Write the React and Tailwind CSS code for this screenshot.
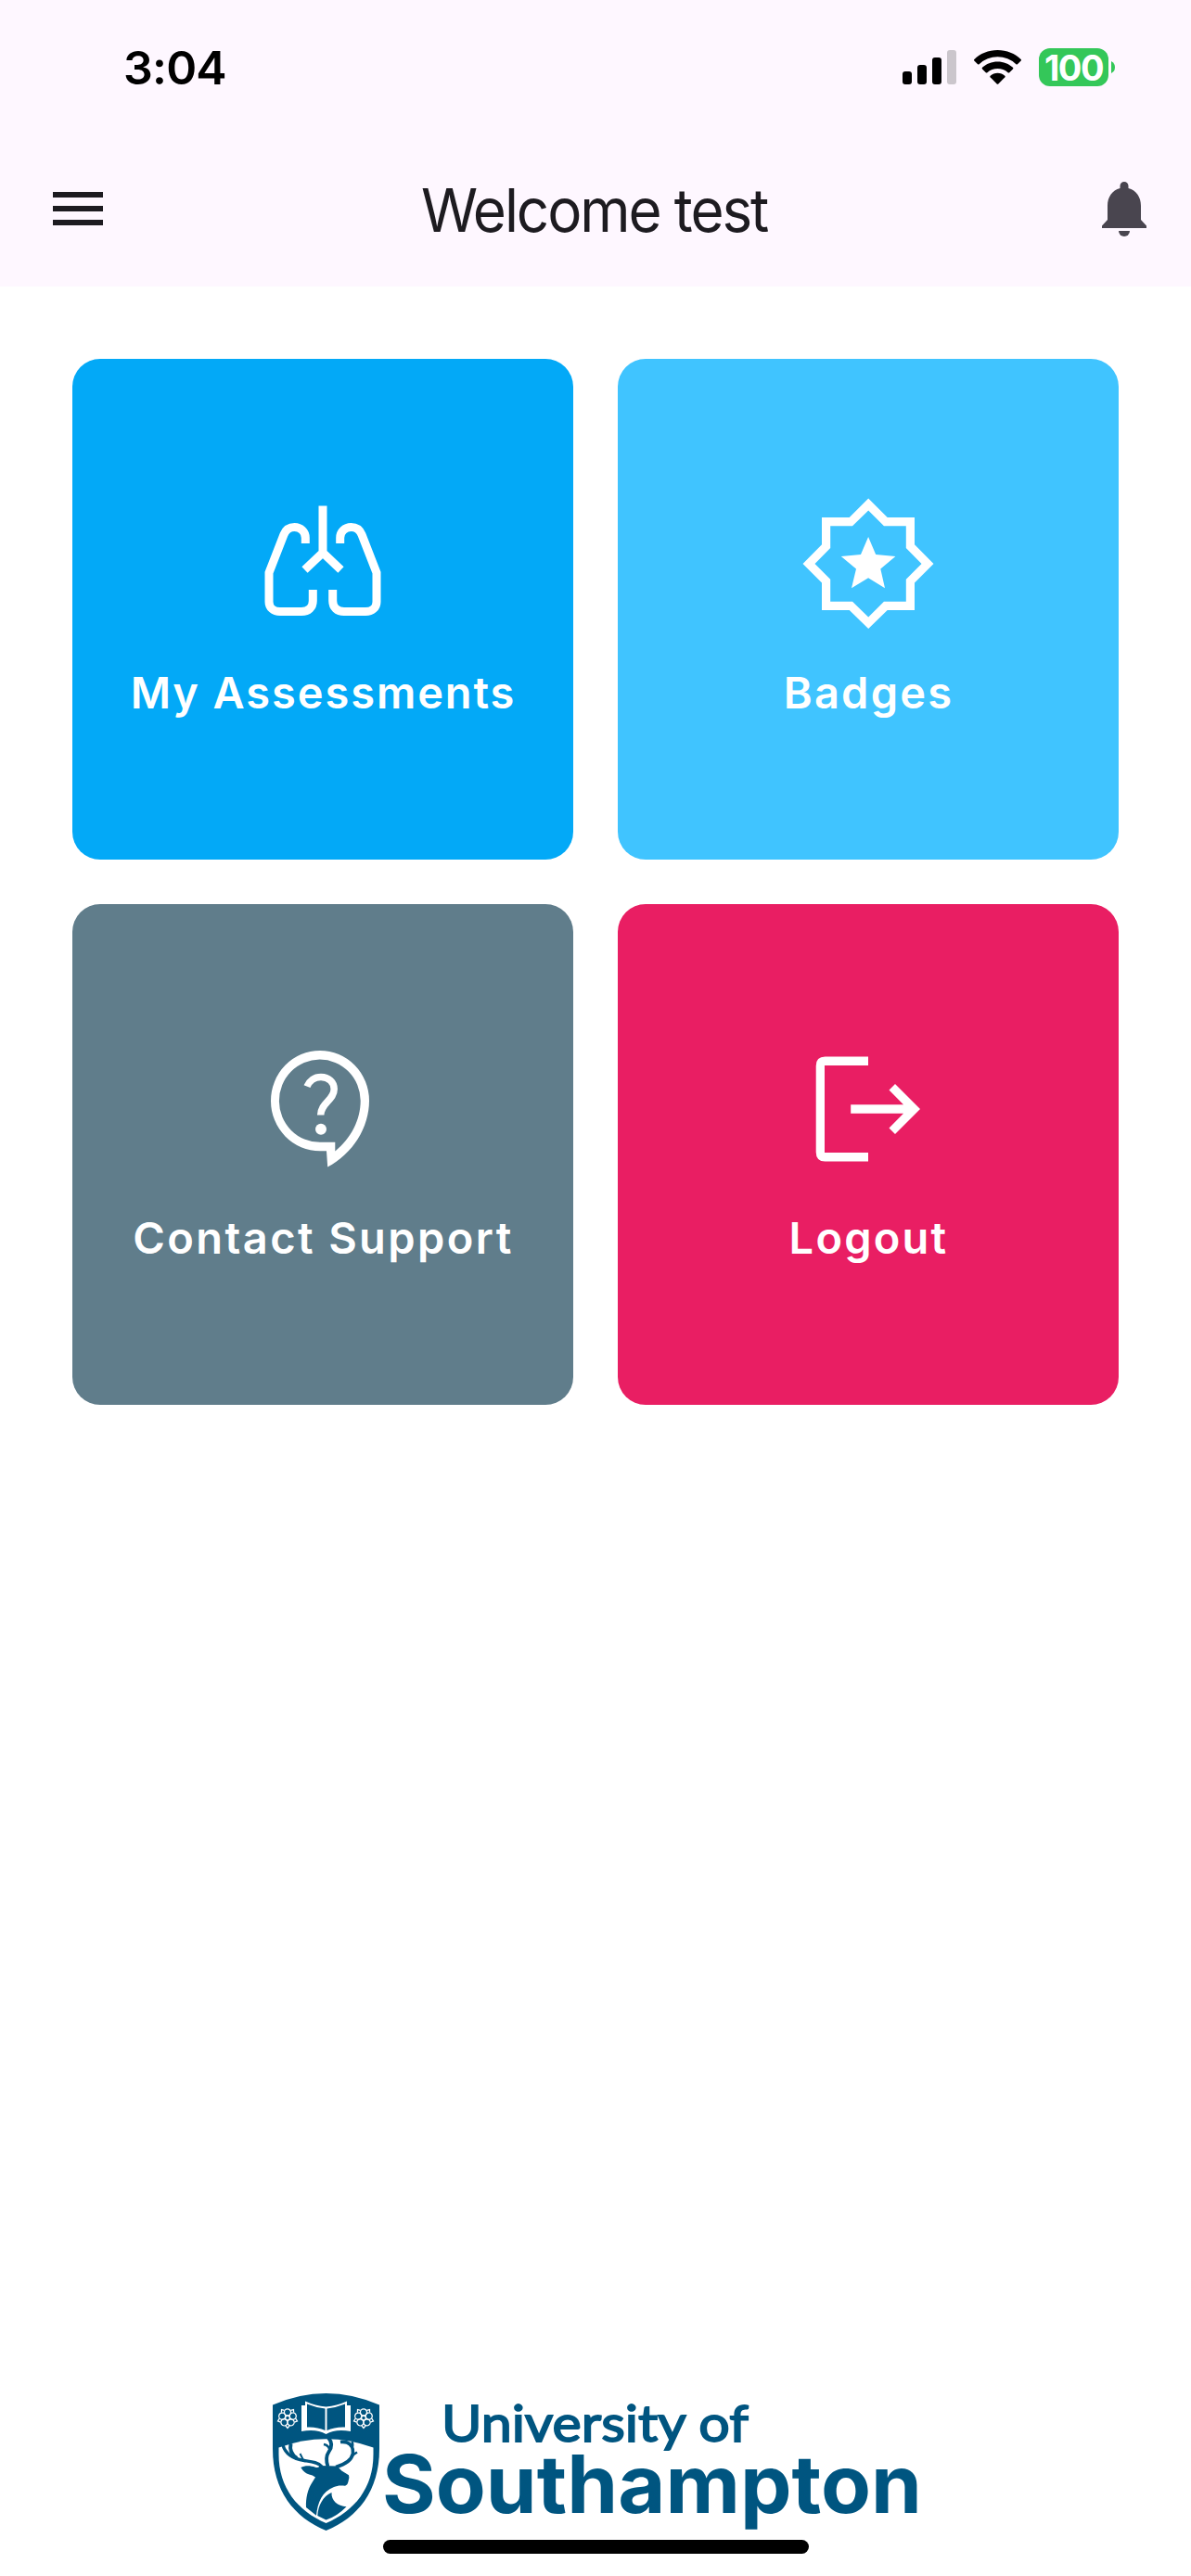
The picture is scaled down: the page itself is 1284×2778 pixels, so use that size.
function StatusBar() {
  return (
    <div className="flex h-[141px] items-start justify-between pl-[133px] pr-[82px] pt-[52px]">
      <span className="mt-px h-[41px] text-[50px] font-semibold leading-[41px] tracking-[-0.8px] text-black">3:04</span>
      <div className="flex h-[41px] items-center">
        <svg className="h-[37px] w-[58px]" viewBox="0 0 58 37">
          <rect x="0" y="23" width="10" height="14" rx="3" />
          <rect x="16" y="16" width="10" height="21" rx="3" />
          <rect x="32" y="8" width="10" height="29" rx="3" />
          <rect x="48" y="0" width="10" height="37" rx="3" fill="#CBC6CC" />
        </svg>
        <svg className="ml-[19px] h-[37px] w-[51px]" viewBox="0 0 51 37">
          <path d="M25.5 0C35.3 0 44.4 3.8 50.6 9.9Q51.4 10.7 50.7 11.5L46.9 15.2Q46.2 15.9 45.4 15.2A28.8 28.8 0 0 0 5.6 15.2Q4.8 15.9 4.1 15.2L.3 11.5Q-.4 10.7 .4 9.9C6.6 3.8 15.7 0 25.5 0Z" />
          <path d="M25.5 12.4C31.9 12.4 37.7 14.8 42 18.8Q42.8 19.6 42 20.4L38.2 24.2Q37.4 24.9 36.600 24.2A16.8 16.8 0 0 0 14.4 24.2Q13.6 24.9 12.8 24.2L9 20.4Q8.2 19.6 9 18.8C13.3 14.8 19.1 12.4 25.5 12.4Z" />
          <path d="M25.5 24.8C28.5 24.8 31.2 25.9 33.3 27.7Q34.1 28.5 33.4 29.3L26.3 36.5Q25.5 37.2 24.7 36.5L17.6 29.3Q16.9 28.5 17.7 27.7C19.8 25.900 22.5 24.8 25.5 24.8Z" />
        </svg>
        <div className="ml-[19px] flex h-[41px] w-[75px] items-center justify-center rounded-[12px] bg-[#34C759] text-[38px] font-bold leading-none tracking-[-1.5px] text-white">
          100
        </div>
        <svg className="ml-[3px] h-[13px] w-[4px]" viewBox="0 0 4 13" fill="#34C759">
          <path d="M0 0Q4 2 4 6.500Q4 11 0 13Z" />
        </svg>
      </div>
    </div>
  );
}

function AppBar() {
  return (
    <div className="flex h-[168px] items-center justify-between pl-[57px] pr-[48px]">
      <div className="flex w-[54px] flex-col gap-[9px]">
        <div className="h-[6px] bg-[#1D1B20]" />
        <div className="h-[6px] bg-[#1D1B20]" />
        <div className="h-[6px] bg-[#1D1B20]" />
      </div>
      <h1 className="mr-[18px] mt-[3px] scale-x-[0.954] text-[65px] font-normal leading-[84px] tracking-[-2.2px] text-[#1D1B20]">Welcome test</h1>
      <svg className="h-[59px] w-[48px]" viewBox="0 0 48 59" fill="#49454F">
        <path d="M19.500 4.500a4.500 4.500 0 0 1 9 0V7C37 9.300 42 16.500 42 26V41L48 47.500V50H0V47.500L6 41V26C6 16.500 11 9.300 19.500 7Z" />
        <path d="M18 53H30A6 6 0 0 1 18 53Z" />
      </svg>
    </div>
  );
}

function LungsIcon() {
  return (
    <svg className="h-[144px] w-[144px]" viewBox="276 535 144 144" fill="none" stroke="white" strokeWidth="9">
      <path d="M348 545.500V597M328.500 614.500L348 596L367.500 614.500" />
      <path d="M329.300 586V580C329.300 573.500 324 568.500 317.500 568.500C311.500 568.500 308 571.500 306 576.500L290 617.500V649C290 655.500 295 659.500 302 659.500H325C332.500 659.500 337.300 655 337.300 648V636" />
      <path d="M366.700 586V580C366.700 573.500 372 568.500 378.500 568.500C384.500 568.500 388 571.500 390 576.500L406 617.500V649C406 655.500 401 659.500 394 659.500H371C363.500 659.500 358.700 655 358.700 648V636" />
    </svg>
  );
}

function BadgeIcon() {
  return (
    <svg className="h-[144px] w-[144px]" viewBox="864 535 144 144" fill="white">
      <path
        fillRule="evenodd"
        d="M936.200 537.500L956.700 558H986V587.300L1006.500 608L986 628.500V658H956.700L936.200 678L915.700 658H886V628.500L865.500 608L886 587.300V558H915.700ZM936.200 550.500L919 567.200H895.200V591L878.500 608L895.200 624.800V648.700H919L936.200 665.500L953 648.700H976.800V624.800L993.500 608L976.800 591V567.200H953Z"
      />
      <path d="M936.100 579L944.200 598L965.400 600L949.300 613.500L954 634.300L936.100 623.300L918 634.300L923 613.500L906.800 600L928 598Z" />
    </svg>
  );
}

function SupportIcon() {
  return (
    <svg className="h-[144px] w-[144px]" viewBox="276 1123 144 144">
      <path
        fill="white"
        fillRule="evenodd"
        d="M353.200 1258.500L352 1241.300H345A53 54.200 0 1 1 398 1187C398 1216 380.500 1244 353.200 1258.500ZM361.300 1241.500C378.500 1227.500 388.700 1207.500 388.700 1187A43.900 44.600 0 1 0 345 1231.800H361.300Z"
      />
      <path fill="none" stroke="white" strokeWidth="7.500" d="M331 1171.700C333.500 1165.500 339 1161.500 346 1161.500C354.500 1161.500 360.200 1167 360.200 1174.500C360.200 1186.500 345.700 1189.500 345.700 1202.500" />
      <circle cx="346" cy="1217.700" r="6" fill="white" />
    </svg>
  );
}

function LogoutIcon() {
  return (
    <svg className="h-[144px] w-[144px]" viewBox="864 1123 144 144" fill="white">
      <path d="M936 1139.500V1149H889V1243H936V1252.500H889.500Q879.700 1252.500 879.700 1242.500V1149.500Q879.700 1139.500 889.500 1139.500Z" />
      <path d="M917.200 1191.300H974L958.500 1175.500L965 1169L992 1196L965 1223L958.500 1216.500L974 1200.700H917.200Z" />
    </svg>
  );
}

const tiles = [
  { label: "My Assessments", color: "bg-[#03A9F7]", tracking: "tracking-[1.9px]", Icon: LungsIcon },
  { label: "Badges", color: "bg-[#40C4FF]", tracking: "tracking-[2.2px]", Icon: BadgeIcon },
  { label: "Contact Support", color: "bg-[#607D8B]", tracking: "tracking-[2.4px]", Icon: SupportIcon },
  { label: "Logout", color: "bg-[#E91E63]", tracking: "tracking-[2.2px]", Icon: LogoutIcon },
];

function Tile({ label, color, tracking, Icon }) {
  return (
    <button className={`flex h-[540px] flex-col items-center rounded-[30px] pt-[148px] ${color}`}>
      <Icon />
      <span className={`ml-px mt-[39px] whitespace-nowrap text-[47px] font-semibold leading-[58px] text-white ${tracking}`}>{label}</span>
    </button>
  );
}

const petals = [0, 72, 144, 216, 288];

function Flower({ x }) {
  return (
    <g transform={`translate(${x} 26.500)`} fill="none" stroke="white" strokeWidth="1.300">
      {petals.map((a) => (
        <g key={a} transform={`rotate(${a})`}>
          <circle cx="0" cy="-6" r="3.600" />
          <path d="M-2 8.500L0 11L2 8.500" />
        </g>
      ))}
      <circle r="2.500" />
    </g>
  );
}

function UniversityLogo() {
  return (
    <svg className="h-[156px] w-[700px] overflow-visible" viewBox="0 0 700 156" fill="#005580">
      <path d="M0 12.500Q57.500 -12.500 115 12.500V60C115 105 92 134 57.500 148C23 134 0 105 0 60Z" />
      <path fill="white" d="M6.500 58.500Q57.500 40 108.500 58.500V66C108.500 102 88 127 57.500 140C27 127 6.500 102 6.500 66Z" />
      <Flower x={16} />
      <Flower x={98} />
      <path fill="white" d="M31 13H35V8.500Q46 13.500 57.500 14.500Q69 13.500 80 8.500V13H84V41Q68 38 57.500 44Q47 38 31 41Z" />
      <path d="M37 11.500Q47 15.500 56.500 16.500V40Q48 36 37 36.500ZM78 11.500Q68 15.500 58.500 16.500V40Q67 36 78 36.500Z" />
      <g fill="none" stroke="#005580" strokeWidth="3.400">
        <path d="M53 79C49 74 41 73.500 34 72.500C24 71 14 66 11 56" />
        <path d="M26 70C20 66 18 61 19.500 54" strokeWidth="4" />
        <path d="M33 72L29.500 65" strokeWidth="2" />
        <path d="M59.500 79C57.500 73 57 68 60.500 63C64 58 64.500 53 60 48" strokeWidth="3.800" />
        <path d="M61 60Q60 56 55 55" strokeWidth="2.500" />
        <path d="M68 79.500C77 77 85 72 86.500 65C87 59 85 55 80 53Q77 52 73 52.500" strokeWidth="3.600" />
        <path d="M85 67.500L91 63.500M85.500 59Q87 56 85.500 52" strokeWidth="2.400" />
      </g>
      <path d="M30.300 80C35 77.500 41 78 46 79.700Q50 81 50.500 78L69.500 78.500L74.300 83.500L82 88.300Q83 91.500 81.700 94Q81 99 78 99.700C73 99 69 99.500 66 101C53 106 48.500 118 47 131.700L36 123C35.500 113 38 103 42 97L46 90.500Q43 88 39.300 87.600Q34 86 30.300 80Z" />
      <path d="M63.500 107C63 116 70 121.500 79.500 122.300Q69 133 57.500 136.500L48.300 132C49 121 54 111 63.500 107Z" />
      <text x="182" y="52" textLength="331" lengthAdjust="spacingAndGlyphs" fontSize="55" stroke="#005580" strokeWidth="1.800" className="font-['Lato',sans-serif]">
        University of
      </text>
      <text x="118" y="129" textLength="582" lengthAdjust="spacingAndGlyphs" fontSize="86" fontWeight="700" className="font-['Inter',sans-serif]">
        Southampton
      </text>
    </svg>
  );
}

export default function App() {
  return (
    <div className="flex h-[2778px] w-[1284px] flex-col bg-white font-['Inter',sans-serif]">
      <header className="h-[309px] bg-[#FEF7FF]">
        <StatusBar />
        <AppBar />
      </header>
      <main className="grid grid-cols-2 gap-[48px] px-[78px] pt-[78px]">
        {tiles.map((t) => (
          <Tile key={t.label} {...t} />
        ))}
      </main>
      <footer className="mt-auto flex h-[197px] flex-col pl-[294px]">
        <UniversityLogo />
        <div className="ml-[119px] mt-[2px] h-[15px] w-[459px] rounded-full bg-black" />
      </footer>
    </div>
  );
}
